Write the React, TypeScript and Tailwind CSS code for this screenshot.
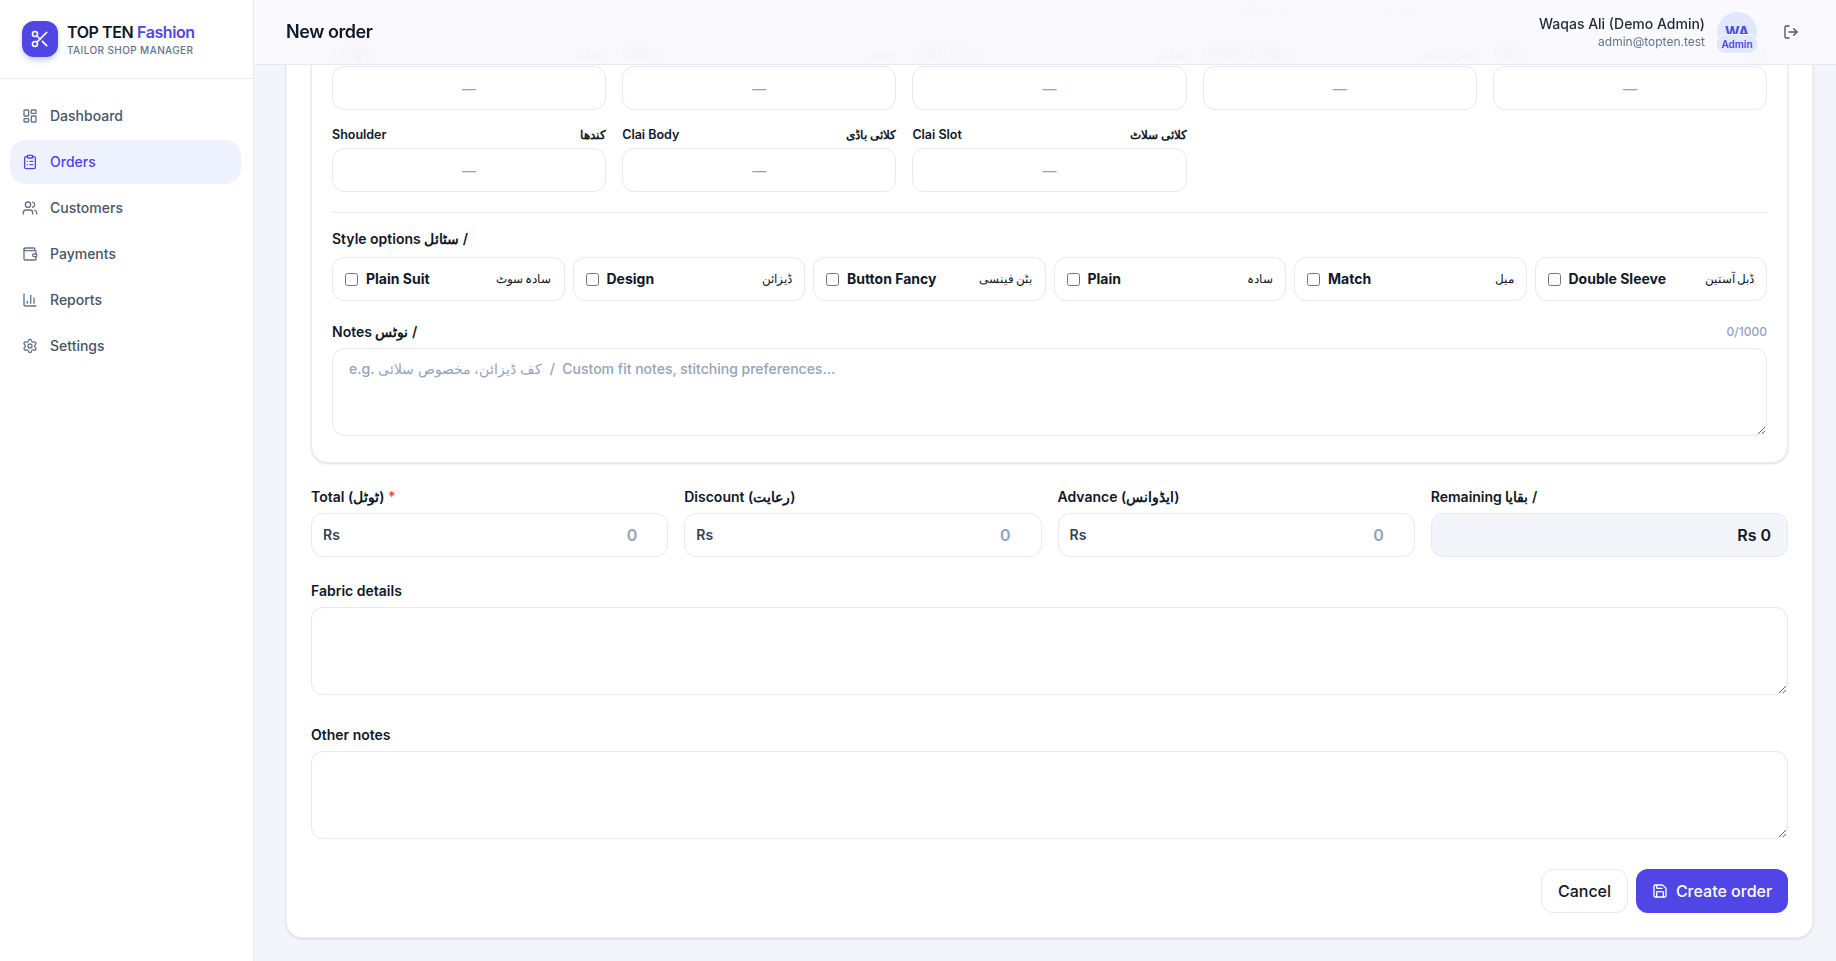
import { LayoutDashboard, ClipboardList, Users, Wallet, ChartColumn, Settings, Scissors, LogOut, Save } from "lucide-react";

const nav = [
  { label: "Dashboard", Icon: LayoutDashboard },
  { label: "Orders", Icon: ClipboardList, active: true },
  { label: "Customers", Icon: Users },
  { label: "Payments", Icon: Wallet },
  { label: "Reports", Icon: ChartColumn },
  { label: "Settings", Icon: Settings },
];

const row1 = [
  ["Length", "لمبائی"],
  ["Sleeve", "آستین"],
  ["Chest Front", "چھاتی"],
  ["Bottom Length", "دامن لمبائی"],
  ["Collar", "کالر"],
];
const row2 = [
  ["Shoulder", "کندھا"],
  ["Clai Body", "کلائی باڈی"],
  ["Clai Slot", "کلائی سلاٹ"],
];
const styles = [
  ["Plain Suit", "سادہ سوٹ"],
  ["Design", "ڈیزائن"],
  ["Button Fancy", "بٹن فینسی"],
  ["Plain", "سادہ"],
  ["Match", "میل"],
  ["Double Sleeve", "ڈبل آستین"],
];
const money = [
  ["Total (", "ٹوٹل", ")", true],
  ["Discount (", "رعایت", ")", false],
  ["Advance (", "ایڈوانس", ")", false],
] as const;

function Measure({ en, ur }: { en: string; ur: string }) {
  return (
    <div>
      <div className="mb-1 flex items-center justify-between text-[12.5px] font-semibold leading-[18px] text-[#111827]">
        <span>{en}</span>
        <span className="text-[12.25px]">{ur}</span>
      </div>
      <input
        placeholder="—"
        className="h-11 w-full rounded-xl border border-[#e6e8f4] bg-white px-3 text-center text-sm outline-none placeholder:text-[#94a3b8]"
      />
    </div>
  );
}

function BigText({ label }: { label: string }) {
  return (
    <div>
      <label className="mb-1.5 block text-sm font-semibold leading-5 text-[#111827]">{label}</label>
      <textarea className="h-[88px] w-full rounded-xl border border-[#e6e8f4] bg-white px-4 py-2.5 text-sm outline-none" />
    </div>
  );
}

export default function App() {
  return (
    <div className="flex h-screen overflow-hidden bg-[#f4f5fb] font-['Inter',sans-serif] text-[#111827]">
      <aside className="flex w-[254px] shrink-0 flex-col border-r border-[#e8eaf3] bg-white">
        <div className="flex h-[79px] items-center gap-[9px] border-b border-[#e8eaf3] pl-[22px]">
          <div className="flex h-9 w-9 items-center justify-center rounded-xl bg-[#4f46e5] text-white shadow-md shadow-indigo-200">
            <Scissors size={20} strokeWidth={2} />
          </div>
          <div>
            <div className="text-base font-semibold leading-5 tracking-tight">
              TOP TEN <span className="text-[#4f46e5]">Fashion</span>
            </div>
            <div className="mt-[1px] text-[10px] font-medium uppercase leading-[14px] tracking-[0.04em] text-[#64748b]">
              Tailor Shop Manager
            </div>
          </div>
        </div>
        <nav className="flex flex-col gap-0.5 pl-[10px] pr-3 pt-[15px]">
          {nav.map(({ label, Icon, active }) => (
            <div
              key={label}
              className={
                active
                  ? "flex h-11 items-center gap-3 rounded-2xl bg-[#eef2fe] px-3 text-sm font-medium text-[#4f46e5]"
                  : "flex h-11 items-center gap-3 rounded-2xl px-3 text-sm font-medium text-[#475569]"
              }
            >
              <Icon size={16} className={active ? "text-[#4f46e5]" : "text-[#64748b]"} />
              <span>{label}</span>
            </div>
          ))}
        </nav>
      </aside>

      <main className="relative min-w-0 flex-1 overflow-hidden">
        <header className="absolute inset-x-0 top-0 z-10 flex h-[65px] items-center justify-between border-b border-[#e6e8f3] bg-[#f9fafe]/90 pl-8 pr-[37px] backdrop-blur-md">
          <h1 className="text-lg font-semibold tracking-tight text-[#111827]">New order</h1>
          <div className="flex items-center">
            <div className="mr-3 text-right">
              <div className="text-sm font-medium leading-5 text-[#1e293b]">Waqas Ali (Demo Admin)</div>
              <div className="text-xs leading-4 text-[#64748b]">admin@topten.test</div>
            </div>
            <div className="relative flex h-10 w-10 items-center justify-center rounded-full bg-[#e0e7ff] text-sm font-bold text-[#4f46e5]">
              WA
              <span className="absolute -bottom-[2px] left-1/2 -translate-x-1/2 rounded-full border border-white bg-[#e0e7ff] px-[5px] py-[2px] text-[10px] font-semibold leading-[14px] text-[#4f46e5]">
                Admin
              </span>
            </div>
            <LogOut size={16} className="ml-[26px] text-[#475569]" />
          </div>
        </header>

        <div className="pl-8 pr-[23px]">
          <div className="-mt-[43px] rounded-2xl border border-[#eef0f7] bg-white p-6 shadow-sm">
            <div className="rounded-2xl border border-[#e6e8f4] bg-white p-5 shadow-sm">
              <div className="mb-[25px] flex text-xs font-medium leading-4 text-[#64748b]">
                <span className="ml-[908px]">Measure</span>
                <span className="ml-[92px]">Inches</span>
              </div>
              <div className="grid grid-cols-5 gap-4">
                {row1.map(([en, ur]) => (
                  <Measure key={en} en={en} ur={ur} />
                ))}
                {row2.map(([en, ur]) => (
                  <Measure key={en} en={en} ur={ur} />
                ))}
              </div>
              <div className="mt-5 border-t border-[#e6e8f4] pt-4">
                <div className="mb-2 text-sm font-semibold leading-5 text-[#111827]">
                  Style options <span dir="rtl">/ سٹائل</span>
                </div>
                <div className="grid grid-cols-6 gap-2">
                  {styles.map(([en, ur]) => (
                    <label
                      key={en}
                      className="flex h-11 items-center justify-between rounded-xl border border-[#e6e8f4] bg-white px-3 text-sm font-bold"
                    >
                      <span className="flex items-center gap-2">
                        <input type="checkbox" />
                        <span>{en}</span>
                      </span>
                      <span className="text-xs font-medium [word-spacing:-1px]">{ur}</span>
                    </label>
                  ))}
                </div>
              </div>
              <div className="mt-[21px]">
                <div className="mb-1.5 flex items-center justify-between">
                  <span className="text-sm font-semibold leading-5 text-[#111827]">
                    Notes <span dir="rtl">/ نوٹس</span>
                  </span>
                  <span className="text-xs font-medium text-[#94a3b8]">0/1000</span>
                </div>
                <textarea
                  placeholder="e.g. کف ڈیزائن، مخصوص سلائی  /  Custom fit notes, stitching preferences..."
                  className="h-[88px] w-full rounded-xl border border-[#e6e8f4] bg-white px-4 py-2.5 text-sm font-medium outline-none placeholder:text-[#94a3b8]"
                />
              </div>
            </div>

            <div className="mt-6 grid grid-cols-4 gap-4">
              {money.map(([a, ur, c, req]) => (
                <div key={a}>
                  <label className="mb-1.5 block text-sm font-semibold leading-5 text-[#111827]">
                    {a}
                    {ur}
                    {c}
                    {req && <span className="text-[#ef4444]"> *</span>}
                  </label>
                  <div className="flex h-11 items-center rounded-xl border border-[#e6e8f4] bg-white pl-[11px] pr-3">
                    <span className="text-sm font-semibold text-[#334155]">Rs</span>
                    <input
                      placeholder="0"
                      className="min-w-0 flex-1 bg-transparent pr-[18px] text-right text-base font-semibold outline-none placeholder:text-[#94a3b8]"
                    />
                  </div>
                </div>
              ))}
              <div>
                <label className="mb-1.5 block text-sm font-semibold leading-5 text-[#111827]">
                  Remaining <span dir="rtl">/ بقایا</span>
                </label>
                <div className="flex h-11 items-center justify-end rounded-xl border border-[#e6e8f4] bg-[#f4f5fb] px-4 text-base font-semibold text-[#111827]">
                  Rs 0
                </div>
              </div>
            </div>

            <div className="mt-6">
              <BigText label="Fabric details" />
            </div>
            <div className="mt-6">
              <BigText label="Other notes" />
            </div>

            <div className="mt-6 flex justify-end gap-2">
              <button className="h-11 w-[87px] rounded-xl border border-[#e6e8f4] bg-white text-base font-medium text-[#111827]">
                Cancel
              </button>
              <button className="flex h-11 w-[152px] items-center justify-center gap-2 rounded-xl bg-[#4f46e5] text-base font-medium text-white">
                <Save size={16} />
                Create order
              </button>
            </div>
          </div>
        </div>
      </main>
    </div>
  );
}
